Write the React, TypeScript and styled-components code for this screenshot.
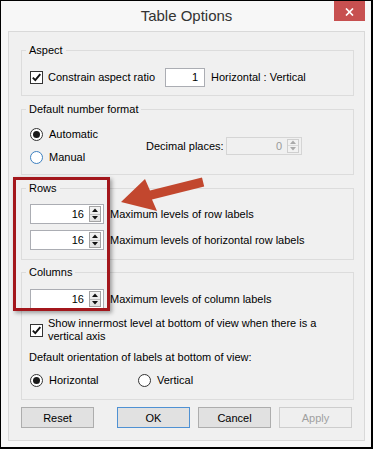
import React from "react";
import styled, { createGlobalStyle } from "styled-components";

const GlobalStyle = createGlobalStyle`
  html, body { margin: 0; padding: 0; background: #ffffff; }
  body {
    font-family: "Liberation Sans", Arial, sans-serif;
    font-size: 11px;
    color: #000;
  }
  * { box-sizing: border-box; }
`;

const Page = styled.div`
  position: relative;
  width: 373px;
  height: 449px;
`;

const Window = styled.div`
  width: 373px;
  height: 449px;
  background: #f7f7f7;
  border-style: solid;
  border-color: #000;
  border-width: 1px 2px 2px 1px;
  padding: 0 6px 6px 7px;
  display: flex;
  flex-direction: column;
`;

const TitleBar = styled.div`
  height: 30px;
  flex: none;
  display: grid;
  grid-template-columns: 1fr auto 1fr;
  align-items: start;
`;

const Title = styled.div`
  grid-column: 2;
  font-size: 15px;
  line-height: 30px;
  color: #333;
`;

const CloseButton = styled.div`
  grid-column: 3;
  justify-self: end;
  width: 31px;
  height: 20px;
  background: #c75050;
  display: flex;
  align-items: center;
  justify-content: center;
  padding-top: 2px;
`;

const Panel = styled.div`
  flex: none;
  height: 410px;
  background: #f0f0f0;
  border: 1px solid #d9d9d9;
  padding: 11px 10px 12px 12px;
  display: flex;
  flex-direction: column;
`;

const Group = styled.fieldset<{ $mt: number; $pt: number; $pb: number }>`
  margin: ${(p) => p.$mt}px 0 0 0;
  padding: ${(p) => p.$pt}px 8px ${(p) => p.$pb}px 8px;
  border: 1px solid #dcdcdc;
  min-width: 0;
  display: flex;
  flex-direction: column;
`;

const Legend = styled.legend`
  padding: 0 3px;
  margin-left: -4px;
  font-size: 11px;
  line-height: 14px;
`;

const Row = styled.div<{ $h?: number; $mt?: number }>`
  display: flex;
  align-items: center;
  height: ${(p) => (p.$h ? `${p.$h}px` : "auto")};
  margin-top: ${(p) => p.$mt ?? 0}px;
`;

const Option = styled.label<{ $w?: number; $gap?: number }>`
  display: flex;
  align-items: center;
  gap: ${(p) => p.$gap ?? 5}px;
  width: ${(p) => (p.$w ? `${p.$w}px` : "auto")};
  flex: none;
`;

const Box = styled.span`
  width: 13px;
  height: 13px;
  flex: none;
  border: 1px solid #333;
  background: #fff;
  display: flex;
  align-items: center;
  justify-content: center;
`;

const Radio = styled.span<{ $checked?: boolean; $focus?: boolean }>`
  width: 13px;
  height: 13px;
  flex: none;
  border-radius: 50%;
  border: 1px solid ${(p) => (p.$focus ? "#3d80c0" : "#333")};
  background: #fff;
  display: flex;
  align-items: center;
  justify-content: center;
  &::after {
    content: "";
    display: ${(p) => (p.$checked ? "block" : "none")};
    width: 7px;
    height: 7px;
    border-radius: 50%;
    background: #1a1a1a;
  }
`;

const Field = styled.div<{ $w: number; $h: number; $disabled?: boolean; $pr?: number }>`
  width: ${(p) => p.$w}px;
  height: ${(p) => p.$h}px;
  flex: none;
  border: 1px solid ${(p) => (p.$disabled ? "#d5d5d5" : "#abadb3")};
  background: ${(p) => (p.$disabled ? "#f0f0f0" : "#fff")};
  color: ${(p) => (p.$disabled ? "#9a9a9a" : "#000")};
  display: flex;
  align-items: center;
  justify-content: flex-end;
  padding-right: ${(p) => p.$pr ?? 2}px;
`;

const Value = styled.span<{ $mr: number }>`
  margin-right: ${(p) => p.$mr}px;
`;

const Spinner = styled.div<{ $h: number; $disabled?: boolean }>`
  width: 12px;
  height: ${(p) => p.$h}px;
  flex: none;
  border: 1px solid ${(p) => (p.$disabled ? "#cfcfcf" : "#a3a3a3")};
  background: ${(p) => (p.$disabled ? "#f2f2f2" : "linear-gradient(#f4f4f4, #e1e1e1)")};
  display: flex;
  flex-direction: column;
`;

const SpinHalf = styled.div<{ $top?: boolean; $disabled?: boolean }>`
  flex: 1;
  display: flex;
  align-items: center;
  justify-content: center;
  border-bottom: ${(p) => (p.$top ? `1px solid ${p.$disabled ? "#dadada" : "#bdbdbd"}` : "none")};
`;

const Text = styled.span<{ $ml?: number }>`
  margin-left: ${(p) => p.$ml ?? 0}px;
  white-space: nowrap;
`;

const WrapText = styled.span`
  max-width: 285px;
  line-height: 13px;
`;

const Caption = styled.div<{ $mt: number }>`
  margin: ${(p) => p.$mt}px 0 0 -1px;
  line-height: 13px;
`;

const RadioColumn = styled.div`
  width: 116px;
  flex: none;
  display: flex;
  flex-direction: column;
  gap: 3px;
`;

const DecLabel = styled.span`
  width: 80px;
  flex: none;
`;

const CheckRow = styled.label`
  display: flex;
  align-items: center;
  gap: 5px;
  margin-top: 8px;
`;

const ButtonRow = styled.div`
  display: flex;
  justify-content: space-between;
  margin-top: 7px;
  padding-right: 2px;
`;

const ButtonGroup = styled.div`
  display: flex;
  gap: 8px;
`;

const Button = styled.button<{ $default?: boolean }>`
  width: 73px;
  height: 21px;
  padding: 0;
  font-family: "Liberation Sans", Arial, sans-serif;
  font-size: 11px;
  color: #000;
  background: #e1e1e1;
  border: 1px solid ${(p) => (p.$default ? "#4f91d3" : "#adadad")};
  &:disabled {
    color: #a0a0a0;
    background: #efefef;
    border-color: #cdcdcd;
  }
`;

const Highlight = styled.div`
  position: absolute;
  left: 13px;
  top: 177px;
  width: 97px;
  height: 134px;
  border: 3px solid #a3171c;
  box-shadow: 2px 2px 4px rgba(0, 0, 0, 0.35);
  pointer-events: none;
`;

const ArrowSvg = styled.svg`
  position: absolute;
  left: 118px;
  top: 172px;
  pointer-events: none;
`;

const Check = () => (
  <Box>
    <svg width="11" height="11" viewBox="0 0 11 11">
      <path d="M1.8 5.6 L4.3 8.2 L9.3 2.2" fill="none" stroke="#111" strokeWidth="1.9" />
    </svg>
  </Box>
);

const Tri = ({ up, color }: { up?: boolean; color: string }) => (
  <svg width="6" height="4" viewBox="0 0 6 4">
    <path d={up ? "M0 4 L3 0.5 L6 4 Z" : "M0 0 L3 3.5 L6 0 Z"} fill={color} />
  </svg>
);

const Spin = ({ value, w, h, disabled }: { value: string; w: number; h: number; disabled?: boolean }) => (
  <Field $w={w} $h={h} $disabled={disabled}>
    <Value $mr={5}>{value}</Value>
    <Spinner $h={h - 4} $disabled={disabled}>
      <SpinHalf $top $disabled={disabled}>
        <Tri up color={disabled ? "#aaa" : "#111"} />
      </SpinHalf>
      <SpinHalf $disabled={disabled}>
        <Tri color={disabled ? "#aaa" : "#111"} />
      </SpinHalf>
    </Spinner>
  </Field>
);

export default function App() {
  return (
    <Page>
      <GlobalStyle />
      <Window>
        <TitleBar>
          <Title>Table Options</Title>
          <CloseButton>
            <svg width="9" height="8" viewBox="0 0 9 8">
              <path d="M1 0.5 L8 7.5 M8 0.5 L1 7.5" stroke="#fff" strokeWidth="1.7" />
            </svg>
          </CloseButton>
        </TitleBar>
        <Panel>
          <Group $mt={0} $pt={10} $pb={8}>
            <Legend>Aspect</Legend>
            <Row $h={20}>
              <Option $w={135}>
                <Check />
                <Text>Constrain aspect ratio</Text>
              </Option>
              <Field $w={40} $h={19} $pr={6}>
                <span>1</span>
              </Field>
              <Text $ml={6}>Horizontal : Vertical</Text>
            </Row>
          </Group>

          <Group $mt={6} $pt={8} $pb={7}>
            <Legend>Default number format</Legend>
            <Row>
              <RadioColumn>
                <Option $gap={6} style={{ height: 20 }}>
                  <Radio $checked />
                  <Text>Automatic</Text>
                </Option>
                <Option $gap={6} style={{ height: 20 }}>
                  <Radio $focus />
                  <Text>Manual</Text>
                </Option>
              </RadioColumn>
              <DecLabel>Decimal places:</DecLabel>
              <Spin value="0" w={76} h={18} disabled />
            </Row>
          </Group>

          <Group $mt={6} $pt={9} $pb={9}>
            <Legend>Rows</Legend>
            <Row $h={20}>
              <Spin value="16" w={74} h={20} />
              <Text $ml={6}>Maximum levels of row labels</Text>
            </Row>
            <Row $h={20} $mt={6}>
              <Spin value="16" w={74} h={20} />
              <Text $ml={6}>Maximum levels of horizontal row labels</Text>
            </Row>
          </Group>

          <Group $mt={5} $pt={10} $pb={9}>
            <Legend>Columns</Legend>
            <Row $h={20}>
              <Spin value="16" w={74} h={20} />
              <Text $ml={6}>Maximum levels of column labels</Text>
            </Row>
            <CheckRow>
              <Check />
              <WrapText>Show innermost level at bottom of view when there is a vertical axis</WrapText>
            </CheckRow>
            <Caption $mt={8}>Default orientation of labels at bottom of view:</Caption>
            <Row $h={20} $mt={6}>
              <Option $w={108} $gap={6}>
                <Radio $checked />
                <Text>Horizontal</Text>
              </Option>
              <Option $gap={6}>
                <Radio />
                <Text>Vertical</Text>
              </Option>
            </Row>
          </Group>

          <ButtonRow>
            <Button>Reset</Button>
            <ButtonGroup>
              <Button $default>OK</Button>
              <Button>Cancel</Button>
              <Button disabled>Apply</Button>
            </ButtonGroup>
          </ButtonRow>
        </Panel>
      </Window>

      <Highlight />
      <ArrowSvg width="90" height="42" viewBox="118 172 90 42">
        <polygon
          points="121,202 145,179 150,190.6 202,177.6 204.2,186.4 152,199.4 157,211"
          fill="#c2472e"
        />
      </ArrowSvg>
    </Page>
  );
}
